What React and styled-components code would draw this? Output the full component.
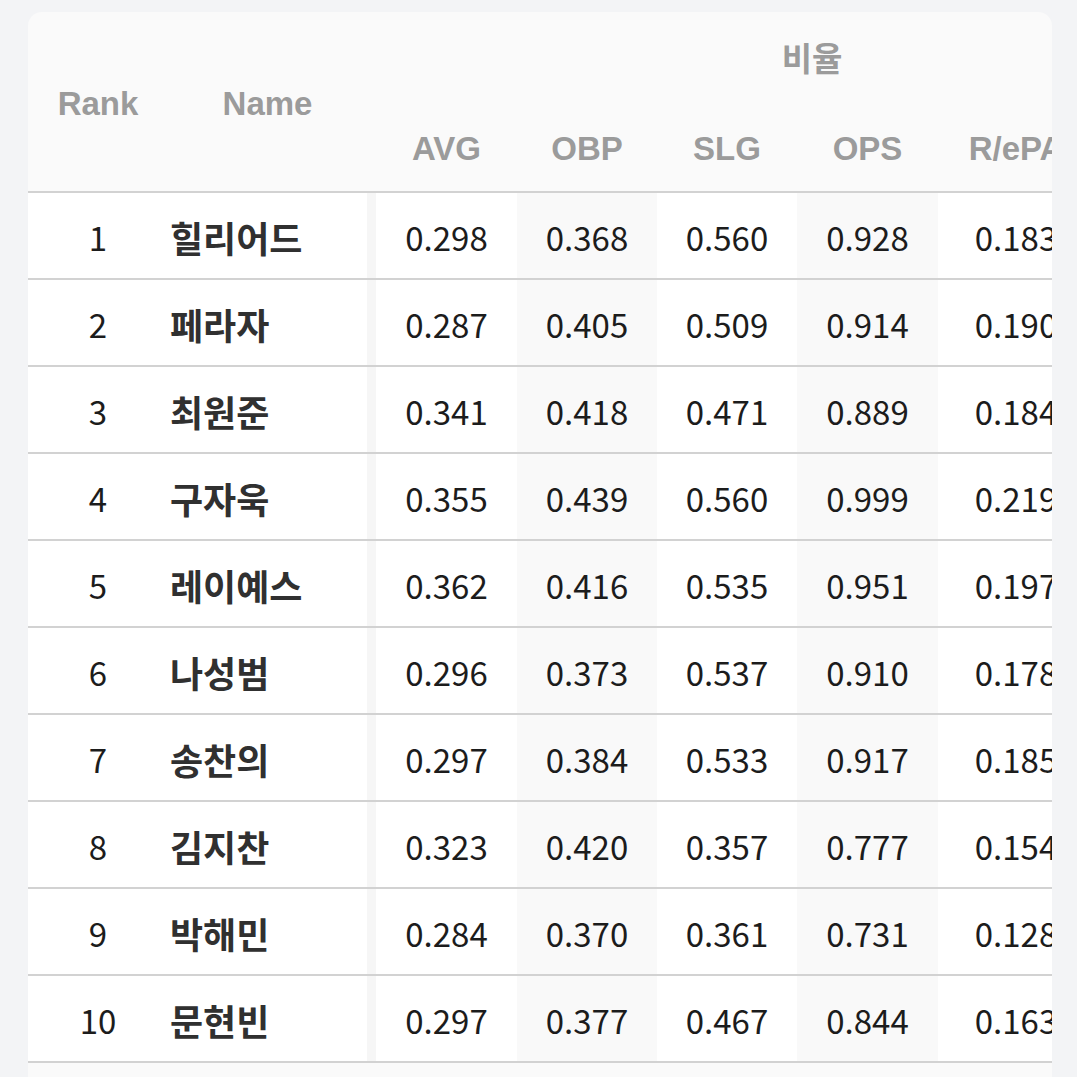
import React from "react";
import styled, { createGlobalStyle } from "styled-components";

const GlobalStyle = createGlobalStyle`
  html, body {
    margin: 0;
    padding: 0;
    background: #f3f4f6;
  }
  body {
    font-family: "Noto Sans CJK KR", "Noto Sans", sans-serif;
  }
`;

const Page = styled.div`
  padding: 12px 25px 0 28px;
  height: 1077px;
  box-sizing: border-box;
  overflow: hidden;
`;

const Card = styled.div`
  width: 1024px;
  background: #fafafa;
  border-radius: 14px 14px 0 0;
  overflow: hidden;
  padding-bottom: 40px;
`;

const Table = styled.table`
  border-collapse: collapse;
  table-layout: fixed;
  width: 1220px;
`;

const HeadCell = styled.th`
  font-family: "Liberation Sans", "Noto Sans CJK KR", Arial, sans-serif;
  font-weight: 700;
  font-size: 33px;
  color: #9b9b9b;
  text-align: center;
  padding: ${(p) => (p.$group ? "0" : "4px 0 0")};
  height: ${(p) => (p.$group ? "90px" : "85px")};
  padding-right: ${(p) => (p.$name ? "9px" : "0")};
  border-bottom: ${(p) => (p.$last ? "2px solid #d2d2d2" : "none")};
`;

const GroupLabel = styled.span`
  font-family: "Noto Sans CJK KR", sans-serif;
  font-weight: 700;
  font-size: 33px;
  color: #9b9b9b;
`;

const Row = styled.tr`
  height: 87px;
  border-bottom: 2px solid #d2d2d2;
  background: #ffffff;
`;

const RankCell = styled.td`
  text-align: center;
  font-size: 33px;
  color: #1c1c1c;
  padding: 2px 0 0;
`;

const NameCell = styled.td`
  text-align: left;
  padding: 2px 0 0 2px;
  font-size: 36px;
  font-weight: 700;
  color: #303030;
  white-space: nowrap;
  background: linear-gradient(to right, #ffffff calc(100% - 9px), #f6f6f6 calc(100% - 9px));
`;

const StatCell = styled.td`
  text-align: center;
  padding: 2px 0 0;
  font-size: 33px;
  color: #1c1c1c;
  background: ${(p) => (p.$shade ? "#f9f9f9" : "#ffffff")};
  white-space: nowrap;
`;

const columns = ["AVG", "OBP", "SLG", "OPS", "R/ePA", "BABIP"];
const widths = [140, 208, 141, 140, 140, 141, 156, 154];

const players = [
  { rank: 1, name: "힐리어드", s: ["0.298", "0.368", "0.560", "0.928", "0.183", "0.331"] },
  { rank: 2, name: "페라자", s: ["0.287", "0.405", "0.509", "0.914", "0.190", "0.318"] },
  { rank: 3, name: "최원준", s: ["0.341", "0.418", "0.471", "0.889", "0.184", "0.372"] },
  { rank: 4, name: "구자욱", s: ["0.355", "0.439", "0.560", "0.999", "0.219", "0.376"] },
  { rank: 5, name: "레이예스", s: ["0.362", "0.416", "0.535", "0.951", "0.197", "0.380"] },
  { rank: 6, name: "나성범", s: ["0.296", "0.373", "0.537", "0.910", "0.178", "0.322"] },
  { rank: 7, name: "송찬의", s: ["0.297", "0.384", "0.533", "0.917", "0.185", "0.340"] },
  { rank: 8, name: "김지찬", s: ["0.323", "0.420", "0.357", "0.777", "0.154", "0.361"] },
  { rank: 9, name: "박해민", s: ["0.284", "0.370", "0.361", "0.731", "0.128", "0.318"] },
  { rank: 10, name: "문현빈", s: ["0.297", "0.377", "0.467", "0.844", "0.163", "0.333"] },
];

export default function App() {
  return (
    <>
      <GlobalStyle />
      <Page>
        <Card>
          <Table>
            <colgroup>
              {widths.map((w, i) => (
                <col key={i} style={{ width: w }} />
              ))}
            </colgroup>
            <thead>
              <tr>
                <HeadCell rowSpan={2} $last>Rank</HeadCell>
                <HeadCell rowSpan={2} $name $last>Name</HeadCell>
                <HeadCell colSpan={6} $group>
                  <GroupLabel>비율</GroupLabel>
                </HeadCell>
              </tr>
              <tr>
                {columns.map((c) => (
                  <HeadCell key={c} $last>{c}</HeadCell>
                ))}
              </tr>
            </thead>
            <tbody>
              {players.map((p) => (
                <Row key={p.rank}>
                  <RankCell>{p.rank}</RankCell>
                  <NameCell>{p.name}</NameCell>
                  {p.s.map((v, i) => (
                    <StatCell key={i} $shade={i % 2 === 1}>{v}</StatCell>
                  ))}
                </Row>
              ))}
            </tbody>
          </Table>
        </Card>
      </Page>
    </>
  );
}
